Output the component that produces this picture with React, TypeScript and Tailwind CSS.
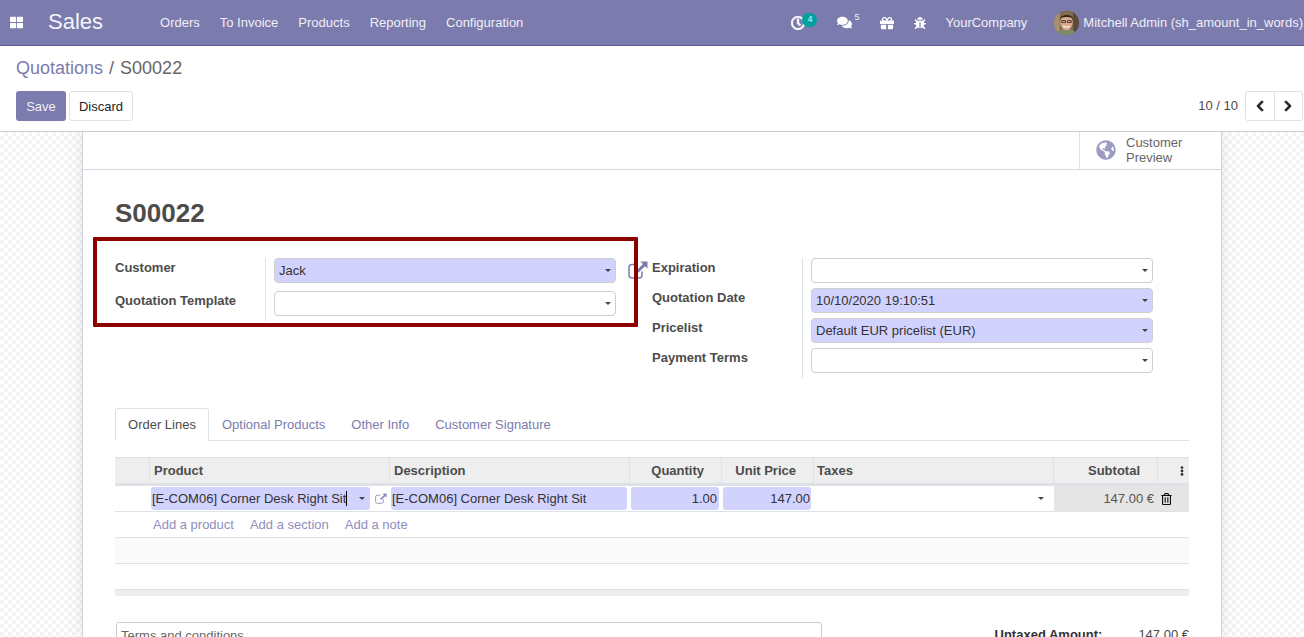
import React from "react";
import { FaThLarge, FaRegClock, FaComments, FaGift, FaBug, FaChevronLeft, FaChevronRight, FaGlobeAmericas, FaRegTrashAlt, FaEllipsisV } from "react-icons/fa";

const Ext = ({ className }: { className: string }) => (
  <svg viewBox="0 0 20 18" className={className} fill="none">
    <path d="M9 3.5H4a3 3 0 0 0-3 3v7.5a3 3 0 0 0 3 3h7a3 3 0 0 0 3-3v-3.5" stroke="currentColor" strokeWidth="1.5" />
    <path d="M12.5 0.5H19.5V7.5L17 5.2 10.5 11.5 8.5 9.5 15 3Z" fill="currentColor" />
  </svg>
);

const Caret = () => <span className="w-0 h-0 border-x-[3.5px] border-x-transparent border-t-[3.5px] border-t-[#444]" />;

const Field = ({ value, blue, className }: { value?: string; blue?: boolean; className: string }) => (
  <div className={`h-[25px] flex items-center justify-between pl-[4px] pr-[4px] rounded-[4px] border border-[#cfcfcf] text-[13px] text-[#333] ${blue ? "bg-[#d2d2ff]" : "bg-white"} ${className}`}>
    <span>{value}</span>
    <Caret />
  </div>
);

const Label = ({ children, className = "" }: { children: React.ReactNode; className?: string }) => (
  <div className={`font-bold text-[13px] leading-[20px] text-[#4c4c4c] ${className}`}>{children}</div>
);

const Th = ({ children, right, className = "" }: { children?: React.ReactNode; right?: boolean; className?: string }) => (
  <div className={`h-full border-r border-[#dee2e6] font-bold text-[13px] text-[#4c4c4c] flex items-center px-1 ${right ? "justify-end pr-[17px]" : ""} ${className}`}>{children}</div>
);

const cols = "grid grid-cols-[35px_240px_240px_92px_92px_240px_104px_31px]";

export default function App() {
  return (
    <div className="h-[637px] w-[1304px] overflow-hidden flex flex-col font-['Liberation_Sans',Arial,sans-serif] text-[13px] text-[#4c4c4c] bg-white">
      <header className="h-[46px] shrink-0 bg-[#7c7bad] border-b border-[#5f5e97] flex items-center text-[#f0eff7]">
        <FaThLarge className="ml-[10px] w-[13px] h-[13px] text-white" />
        <span className="ml-[25px] text-[22px] leading-none text-[#f4f4f9] mb-[1px]">Sales</span>
        <nav className="ml-[47px] flex">
          {["Orders", "To Invoice", "Products", "Reporting", "Configuration"].map((t) => (
            <span key={t} className="px-[10px] whitespace-nowrap">{t}</span>
          ))}
        </nav>
        <div className="ml-auto mr-[1px] flex items-center whitespace-nowrap">
          <div className="relative mr-[32px]">
            <FaRegClock className="w-[14px] h-[14px] text-white" stroke="currentColor" strokeWidth={30} />
            <span className="absolute left-[11px] -top-[3px] w-[15px] h-[14px] rounded-full bg-[#00a09d] text-[9px] leading-[13px] text-center text-[#e8f6f6]">4</span>
          </div>
          <div className="relative mr-[28px]">
            <FaComments className="w-[15px] h-[15px] text-white" />
            <span className="absolute left-[17px] -top-[2px] text-[9px] leading-none">5</span>
          </div>
          <FaGift className="w-[14px] h-[14px] text-white mr-[20px]" />
          <FaBug className="w-[12px] h-[12px] text-white mr-[19px]" />
          <span className="mr-[27px]">YourCompany</span>
          <svg viewBox="0 0 26 26" className="w-[25px] h-[26px] mr-[4px]">
            <defs><clipPath id="av"><circle cx="13" cy="13" r="13" /></clipPath></defs>
            <g clipPath="url(#av)">
              <rect width="26" height="26" fill="#7d6a50" />
              <rect x="0" y="0" width="6" height="26" fill="#a8916c" />
              <rect x="20" y="0" width="6" height="26" fill="#5c4a38" />
              <path d="M3 26c1-6 6-7 10-7s9 1 10 7Z" fill="#7f8a6a" />
              <ellipse cx="13" cy="12.5" rx="6.5" ry="8" fill="#d9a98c" />
              <path d="M6 10C5.500 3 20.500 2.500 20 10L18.500 7.500C15 6.500 11 6.500 7.500 7.500Z" fill="#33241c" />
              <path d="M8 10.500h4v2H8zM14 10.500h4v2h-4z" fill="none" stroke="#2d2420" strokeWidth="0.8" />
              <path d="M9.500 16q3.500 2.500 7 0" stroke="#f7f0e8" strokeWidth="1.300" fill="none" />
            </g>
          </svg>
          <span>Mitchell Admin (sh_amount_in_words)</span>
        </div>
      </header>

      <div className="h-[86px] shrink-0 border-b border-[#ccc] px-4 pt-[9px]">
        <div className="h-[26px] text-[18px] leading-[26px] text-[#666] flex gap-[6px]">
          <span className="text-[#7c7bad]">Quotations</span><span>/</span><span>S00022</span>
        </div>
        <div className="mt-[10px] flex items-center">
          <button className="h-[30px] w-[50px] pt-[1px] rounded-[3px] bg-[#7c7bad] text-[#f0eff7] text-[13px]">Save</button>
          <button className="ml-[3px] h-[30px] w-[64px] pt-[1px] rounded-[3px] bg-white border border-[#dee2e6] text-[#212529] text-[13px]">Discard</button>
          <span className="ml-auto mr-[7px] text-[#4c4c4c]">10 / 10</span>
          <div className="h-[30px] w-[58px] flex border border-[#dee2e6] rounded-[3px] -mr-[15px] text-[#212529]">
            <span className="flex-1 flex items-center justify-center border-r border-[#dee2e6]"><FaChevronLeft className="w-[12px] h-[12px]" stroke="currentColor" strokeWidth={40} /></span>
            <span className="flex-1 flex items-center justify-center"><FaChevronRight className="w-[12px] h-[12px]" stroke="currentColor" strokeWidth={40} /></span>
          </div>
        </div>
      </div>

      <div className="flex-1 min-h-0 px-[82px] overflow-hidden bg-[repeating-conic-gradient(#f4f4f4_0_25%,#ffffff_0_50%)] bg-[length:8px_8px]">
        <div className="h-full bg-white border-x border-[#d0d0de] shadow-[0_0_16px_rgba(0,0,0,0.1)] overflow-hidden">
          <div className="h-[38px] border-b border-[#d5d5dd] flex justify-end">
            <div className="w-[142px] border-l border-[#dee2e6] flex items-center pl-[16px] pb-[2px] text-[#666] leading-[15px]">
              <FaGlobeAmericas className="w-[20px] h-[20px] text-[#9c9bc4] mr-[10px]" />
              <span>Customer<br />Preview</span>
            </div>
          </div>

          <div className="px-[32px]">
            <h1 className="mt-[27px] text-[26px] leading-[32px] font-bold text-[#4c4c4c]">S00022</h1>

            <div className="relative mt-[29px] h-[120px] flex">
              <div className="absolute -left-[22px] -top-[21px] w-[545px] h-[90px] border-[4px] border-[#8c0000] rounded-[1px] pointer-events-none z-10" />
              <div className="w-[150px] shrink-0 flex flex-col gap-[13px] h-[63px]">
                <Label>Customer</Label>
                <Label>Quotation Template</Label>
              </div>
              <div className="w-[351px] h-[63px] shrink-0 border-l border-[#dee2e6] pl-[8px] flex flex-col gap-[8px]">
                <Field value="Jack" blue className="w-[342px]" />
                <Field className="w-[342px]" />
              </div>
              <Ext className="w-[20px] h-[18px] mt-[3px] ml-[12px] text-[#7c7bad] shrink-0" />
              <div className="w-[150px] ml-[4px] shrink-0 flex flex-col gap-[10px]">
                <Label>Expiration</Label>
                <Label>Quotation Date</Label>
                <Label>Pricelist</Label>
                <Label>Payment Terms</Label>
              </div>
              <div className="border-l border-[#dee2e6] pl-[8px] flex flex-col gap-[5px] h-[120px]">
                <Field className="w-[342px]" />
                <Field value="10/10/2020 19:10:51" blue className="w-[342px]" />
                <Field value="Default EUR pricelist (EUR)" blue className="w-[342px]" />
                <Field className="w-[342px]" />
              </div>
            </div>

            <div className="mt-[30px] h-[33px] flex border-b border-[#dee2e6]">
              <span className="h-[33px] w-[94px] border border-[#dee2e6] border-b-white rounded-t-[3px] flex items-center justify-center text-[#4c4c4c]">Order Lines</span>
              <span className="ml-[13px] leading-[33px] text-[#7c7bad]">Optional Products</span>
              <span className="ml-[26px] leading-[33px] text-[#7c7bad]">Other Info</span>
              <span className="ml-[26px] leading-[33px] text-[#7c7bad]">Customer Signature</span>
            </div>

            <div className="mt-[16px]">
              <div className={`${cols} h-[26px] bg-[#eeeeee] border-t border-[#dee2e6] items-center`}>
                <Th />
                <Th>Product</Th>
                <Th>Description</Th>
                <Th right>Quantity</Th>
                <Th right>Unit Price</Th>
                <Th className="pl-[3px]">Taxes</Th>
                <Th right>Subtotal</Th>
                <div className="flex items-center justify-center"><FaEllipsisV className="w-[10px] h-[10px] text-[#333] -mr-[16px]" /></div>
              </div>
              <div className={`${cols} h-[29px] border-t-[3px] border-t-[#dee2e6] border-b border-b-[#dee2e6] text-[#333]`}>
                <div />
                <div className="flex items-center pl-[1px]">
                  <div className="h-[23px] w-[219px] bg-[#d2d2ff] rounded-[3px] flex items-center justify-between pl-[1px] pr-[5px]">
                    <span className="border-r border-black leading-[15px] pr-0 whitespace-nowrap">[E-COM06] Corner Desk Right Sit</span>
                    <Caret />
                  </div>
                  <Ext className="ml-[5px] w-[12px] h-[11px] text-[#8f8ebb] shrink-0" />
                </div>
                <div className="flex items-center pl-[1px]">
                  <div className="h-[23px] w-[236px] bg-[#d2d2ff] rounded-[3px] flex items-center pl-[1px] whitespace-nowrap">[E-COM06] Corner Desk Right Sit</div>
                </div>
                <div className="flex items-center pl-[1px]">
                  <div className="h-[23px] w-[88px] bg-[#d2d2ff] rounded-[3px] flex items-center justify-end pr-[2px]">1.00</div>
                </div>
                <div className="flex items-center pl-[1px]">
                  <div className="h-[23px] w-[88px] bg-[#d2d2ff] rounded-[3px] flex items-center justify-end pr-[1px]">147.00</div>
                </div>
                <div className="flex items-center justify-end pr-[10px]"><Caret /></div>
                <div className="bg-[#e5e5e5] flex items-center justify-end pr-[4px] text-[#555]">147.00 €</div>
                <div className="bg-[#e5e5e5] flex items-center pl-[3px] text-[#111]"><FaRegTrashAlt className="w-[11px] h-[12px]" /></div>
              </div>
              <div className="h-[26px] border-b border-[#dee2e6] flex items-center pl-[38px] gap-[16px] text-[#8f8ebb]">
                <span>Add a product</span><span>Add a section</span><span>Add a note</span>
              </div>
              <div className="h-[26px] bg-[#fafafa] border-b border-[#dee2e6]" />
              <div className="h-[26px] border-b border-[#dee2e6]" />
              <div className="h-[6px] bg-[#eeeeee]" />
            </div>

            <div className="mt-[26px] flex items-start">
              <div className="ml-[1px] w-[706px] h-[40px] border border-[#ccc] rounded-[3px] pl-[4px] pt-[5px] leading-[15px] text-[#666]">Terms and conditions</div>
              <div className="ml-auto flex mt-[5px] leading-[15px]">
                <span className="font-bold text-[#333]">Untaxed Amount:</span>
                <span className="ml-[36px] text-[#4c4c4c]">147.00 €</span>
              </div>
            </div>
          </div>
        </div>
      </div>
    </div>
  );
}
